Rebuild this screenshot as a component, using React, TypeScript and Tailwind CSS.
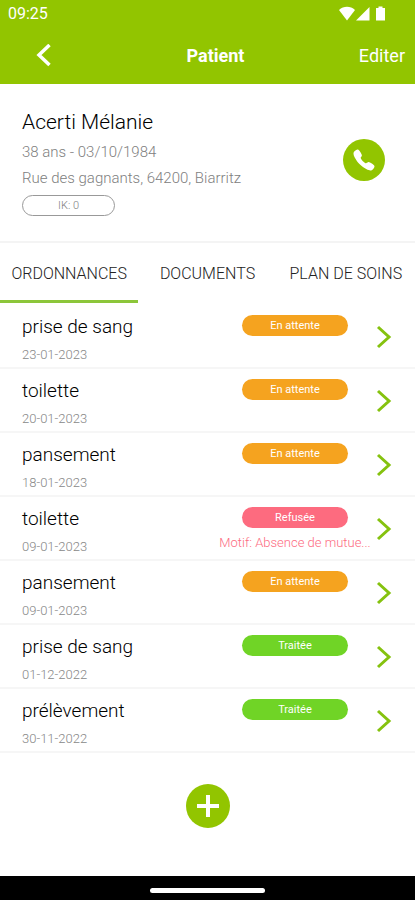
import React, {useState} from 'react';
import {IoCall} from 'react-icons/io5';

type Status = 'pending' | 'refused' | 'done';

interface Prescription {
  id: number;
  title: string;
  date: string;
  status: Status;
  reason?: string;
}

const TABS = ['ORDONNANCES', 'DOCUMENTS', 'PLAN DE SOINS'];

const STATUS: Record<Status, {label: string; className: string}> = {
  pending: {label: 'En attente', className: 'bg-[#f5a31f]'},
  refused: {label: 'Refusée', className: 'bg-[#fd6b7f]'},
  done: {label: 'Traitée', className: 'bg-[#70d426]'},
};

const PRESCRIPTIONS: Prescription[] = [
  {id: 1, title: 'prise de sang', date: '23-01-2023', status: 'pending'},
  {id: 2, title: 'toilette', date: '20-01-2023', status: 'pending'},
  {id: 3, title: 'pansement', date: '18-01-2023', status: 'pending'},
  {id: 4, title: 'toilette', date: '09-01-2023', status: 'refused', reason: 'Motif: Absence de mutue...'},
  {id: 5, title: 'pansement', date: '09-01-2023', status: 'pending'},
  {id: 6, title: 'prise de sang', date: '01-12-2022', status: 'done'},
  {id: 7, title: 'prélèvement', date: '30-11-2022', status: 'done'},
];

const StatusBar: React.FC = () => (
  <div className="flex h-7 items-center justify-between pl-2 pr-7">
    <span className="text-base">09:25</span>
    <svg className="h-4 w-12" viewBox="0 0 48 16" fill="currentColor" aria-hidden="true">
      <path d="M0 4C4.500-.2 11.500-.2 16 4L8 14.500z" />
      <path d="M30.500 1V14.500H17z" />
      <path d="M37 2h2.500V.5h4V2H46v12.500h-9z" />
    </svg>
  </div>
);

const Header: React.FC = () => (
  <header className="bg-[#92c500] text-white">
    <StatusBar />
    <div className="grid h-14 grid-cols-3 items-center">
      <button type="button" aria-label="Retour" className="ml-8 flex h-6 w-6 items-center justify-center">
        <svg className="h-6 w-6" viewBox="0 0 24 24" fill="none" stroke="currentColor" strokeWidth="3.500">
          <path d="M17.500 1L7 11l10.500 10" />
        </svg>
      </button>
      <h1 className="pl-4 text-center text-lg font-bold">Patient</h1>
      <button type="button" className="justify-self-end pr-2.5 text-lg">Editer</button>
    </div>
  </header>
);

const PatientCard: React.FC = () => (
  <section className="flex items-start justify-between border-b-2 border-[#f4f4f4] pt-6 pr-[30px] pb-[25px] pl-[22px]">
    <div className="flex flex-col items-start">
      <h2 className="text-[21px] leading-7 font-light text-black">Acerti Mélanie</h2>
      <p className="mt-[3px] text-[15px] leading-[26px] font-light text-[#808080]">38 ans - 03/10/1984</p>
      <p className="text-[15px] leading-[26px] font-light text-[#808080]">Rue des gagnants, 64200, Biarritz</p>
      <span className="mt-1 flex h-[21px] w-[93px] items-center justify-center rounded-full border border-[#999] pt-px text-[11px] font-light text-[#808080]">
        IK: 0
      </span>
    </div>
    <button
      type="button"
      aria-label="Appeler"
      className="mt-[31px] flex h-[42px] w-[42px] shrink-0 items-center justify-center rounded-full bg-[#92c500] text-white"
    >
      <IoCall className="h-6 w-6" />
    </button>
  </section>
);

const PrescriptionRow: React.FC<{item: Prescription}> = ({item}) => {
  const status = STATUS[item.status];
  return (
    <li className="border-b-2 border-[#f6f6f6]">
      <button type="button" className="flex h-[62px] w-full items-start pr-[23px] pl-[22px] text-left">
        <span className="flex min-w-0 flex-1 flex-col pt-2">
          <span className="text-[19px] leading-7 font-light text-black">{item.title}</span>
          <span className="mt-1 text-[13px] leading-5 font-light text-[#888]">{item.date}</span>
        </span>
        <span className="flex w-[152px] shrink-0 flex-col items-center pt-2.5">
          <span
            className={`flex h-[21px] w-[106px] items-center justify-center rounded-full pt-px text-[11px] font-normal text-white ${status.className}`}
          >
            {status.label}
          </span>
          {item.reason && (
            <span className="mt-[3px] text-[13px] leading-6 font-light whitespace-nowrap text-[#fd6b7f]">
              {item.reason}
            </span>
          )}
        </span>
        <svg
          className="mt-5 ml-[5px] h-6 w-4 shrink-0"
          viewBox="0 0 16 24"
          fill="none"
          stroke="#85c20f"
          strokeWidth="3"
          aria-hidden="true"
        >
          <path d="M2 2l11 10L2 22" />
        </svg>
      </button>
    </li>
  );
};

export default function App() {
  const [activeTab, setActiveTab] = useState(TABS[0]);

  return (
    <div className="flex min-h-screen flex-col bg-white font-[Roboto,'Noto_Sans',sans-serif]">
      <Header />
      <PatientCard />
      <nav className="grid h-[60px] grid-cols-3" role="tablist">
        {TABS.map(tab => (
          <button
            key={tab}
            type="button"
            role="tab"
            aria-selected={tab === activeTab}
            onClick={() => setActiveTab(tab)}
            className={`border-b-3 pt-1 text-base font-light whitespace-nowrap text-[#222] ${tab === activeTab ? 'border-[#8cc63a]' : 'border-transparent'}`}
          >
            {tab}
          </button>
        ))}
      </nav>
      <ul className="pt-0.5">
        {PRESCRIPTIONS.map(item => (
          <PrescriptionRow key={item.id} item={item} />
        ))}
      </ul>
      <div className="flex flex-1 justify-center pt-[31px] pb-12">
        <button
          type="button"
          aria-label="Ajouter"
          className="flex h-11 w-11 items-center justify-center rounded-full bg-[#92c500] text-white"
        >
          <svg className="h-6 w-6" viewBox="0 0 24 24" fill="none" stroke="currentColor" strokeWidth="4">
            <path d="M12 1v22M1 12h22" />
          </svg>
        </button>
      </div>
      <div className="flex h-6 items-center justify-center bg-black pt-1">
        <div className="h-[5px] w-[115px] rounded-full bg-white" />
      </div>
    </div>
  );
}
